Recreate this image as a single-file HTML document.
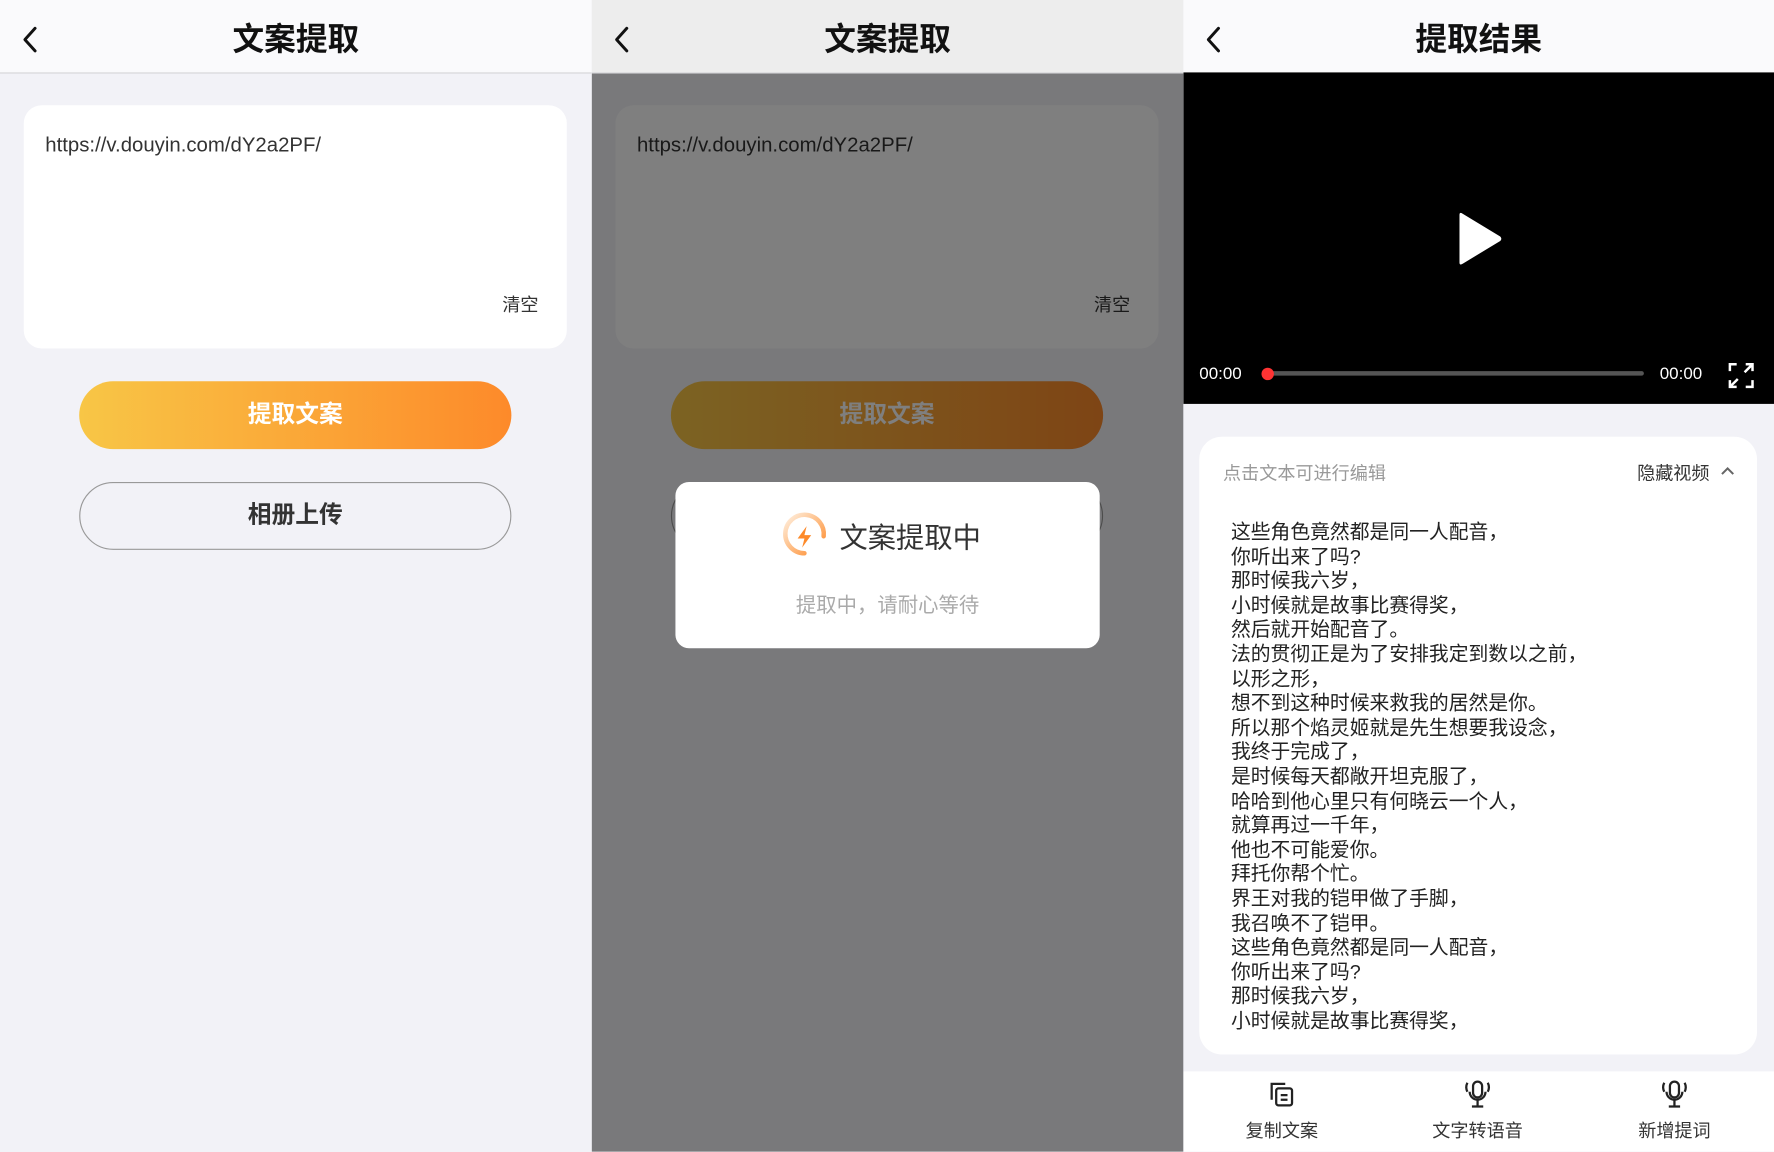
<!DOCTYPE html>
<html><head><meta charset="utf-8"><style>
*{margin:0;padding:0;box-sizing:border-box}
html,body{width:1774px;height:1152px;overflow:hidden;background:#f2f2f7}
body{font-family:"Liberation Sans","Noto Sans CJK SC",sans-serif}
#w{position:absolute;left:0;top:0;width:1568px;height:1018px;transform:scale(1.13138);transform-origin:0 0}
.a{position:absolute}
.p{position:absolute;top:0;height:1018px;width:523px;background:#f2f2f7;overflow:hidden}
.hd{position:absolute;left:0;top:0;width:100%;height:65px;background:#fafafc;border-bottom:1px solid #d4d4d8}
.tt{position:absolute;width:100%;top:13px;text-align:center;font-size:28px;font-weight:bold;color:#111}
.bk{position:absolute;left:18px;top:22px}
.card{position:absolute;left:21px;top:93px;width:480px;height:215px;background:#fff;border-radius:16px}
.url{position:absolute;left:19px;top:25px;font-size:18px;color:#333}
.clr{position:absolute;right:25px;top:163px;font-size:16px;color:#333}
.b1{position:absolute;left:70px;top:337px;width:382px;height:60px;border-radius:30px;background:linear-gradient(90deg,#f8c646,#fd8a2a);color:#fff;font-size:21px;font-weight:bold;text-align:center;line-height:60px}
.b2{position:absolute;left:70px;top:426px;width:382px;height:60px;border-radius:30px;border:1.5px solid #999;color:#333;font-size:21px;font-weight:bold;text-align:center;line-height:57px}
.txt{position:absolute;left:28px;top:74px;font-size:17.5px;line-height:21.6px;color:#222;white-space:pre}
.tb{position:absolute;top:947px;left:0;width:522px;height:71px;background:#fff}
.ti{position:absolute;top:6px;width:120px;text-align:center}
.ti span{display:block;font-size:16px;color:#333;margin-top:0}
</style></head><body><div id="w">

<div class="p" style="left:0">
<div class="hd"><svg class="bk" width="18" height="26" viewBox="0 0 18 26"><path d="M13 3L4 13l9 10" fill="none" stroke="#111" stroke-width="2.6" stroke-linecap="round" stroke-linejoin="round"/></svg><div class="tt">文案提取</div></div>
<div class="card"><div class="url">https://v.douyin.com/dY2a2PF/</div><div class="clr">清空</div></div>
<div class="b1">提取文案</div>
<div class="b2">相册上传</div>
</div>

<div class="p" style="left:523px">
<div class="hd" style="background:#ededed"><svg class="bk" width="18" height="26" viewBox="0 0 18 26"><path d="M13 3L4 13l9 10" fill="none" stroke="#111" stroke-width="2.6" stroke-linecap="round" stroke-linejoin="round"/></svg><div class="tt">文案提取</div></div>
<div class="card"><div class="url">https://v.douyin.com/dY2a2PF/</div><div class="clr">清空</div></div>
<div class="b1">提取文案</div>
<div class="b2">相册上传</div>
<div class="a" style="left:0;top:65px;width:523px;height:953px;background:rgba(0,0,0,0.5)"></div>
<div class="a" style="left:74px;top:426px;width:375px;height:147px;background:#fff;border-radius:12px">
<svg class="a" style="left:92px;top:26px" width="44" height="44" viewBox="0 0 44 44"><defs><linearGradient id="g" x1="1" y1="0" x2="0" y2="1"><stop offset="0" stop-color="#fd8a2a"/><stop offset="1" stop-color="#fff0e0"/></linearGradient></defs><path d="M37 22A17 17 0 1 1 22 5" fill="none" stroke="url(#g)" stroke-width="4" stroke-linecap="round" transform="rotate(90 22 22)"/><path d="M24 13l-8 11h6l-2 8 8-11h-6z" fill="#fd8a2a"/></svg>
<div class="a" style="left:145px;top:30px;font-size:25px;color:#333">文案提取中</div>
<div class="a" style="left:0;width:375px;top:95px;text-align:center;font-size:18px;color:#aaa">提取中，请耐心等待</div>
</div>
</div>

<div class="p" style="left:1046px;width:522px">
<div class="hd" style="border:none;height:64px"><svg class="bk" width="18" height="26" viewBox="0 0 18 26"><path d="M13 3L4 13l9 10" fill="none" stroke="#111" stroke-width="2.6" stroke-linecap="round" stroke-linejoin="round"/></svg><div class="tt">提取结果</div></div>
<div class="a" style="left:0;top:64px;width:522px;height:293px;background:#000">
<svg class="a" style="left:241px;top:122px" width="42" height="50" viewBox="0 0 42 50"><path d="M3 4Q3 1 6 3L39 23Q41 25 39 27L6 47Q3 49 3 46Z" fill="#fff"/></svg>
<div class="a" style="left:14px;top:258px;font-size:15px;color:#fff">00:00</div>
<div class="a" style="left:75px;top:264px;width:332px;height:4px;border-radius:2px;background:#555"></div>
<div class="a" style="left:69px;top:261px;width:11px;height:11px;border-radius:50%;background:#f33"></div>
<div class="a" style="left:421px;top:258px;font-size:15px;color:#fff">00:00</div>
<svg class="a" style="left:481px;top:256px" width="24" height="24" viewBox="0 0 24 24" fill="none" stroke="#fff" stroke-width="2.2"><path d="M2 8V2h6M22 8V2h-6M2 16v6h6M22 16v6h-6M15 9l6-6M9 15l-6 6"/></svg>
</div>
<div class="a" style="left:14px;top:386px;width:493px;height:546px;background:#fff;border-radius:20px">
<div class="a" style="left:21px;top:19px;font-size:16px;color:#999">点击文本可进行编辑</div>
<div class="a" style="left:387px;top:19px;font-size:16px;color:#333">隐藏视频</div>
<svg class="a" style="left:460px;top:25px" width="14" height="10" viewBox="0 0 14 10"><path d="M2 8l5-5 5 5" fill="none" stroke="#666" stroke-width="1.8"/></svg>
<div class="txt">这些角色竟然都是同一人配音，
你听出来了吗?
那时候我六岁，
小时候就是故事比赛得奖，
然后就开始配音了。
法的贯彻正是为了安排我定到数以之前，
以形之形，
想不到这种时候来救我的居然是你。
所以那个焰灵姬就是先生想要我设念，
我终于完成了，
是时候每天都敞开坦克服了，
哈哈到他心里只有何晓云一个人，
就算再过一千年，
他也不可能爱你。
拜托你帮个忙。
界王对我的铠甲做了手脚，
我召唤不了铠甲。
这些角色竟然都是同一人配音，
你听出来了吗?
那时候我六岁，
小时候就是故事比赛得奖，</div>
</div>
<div class="tb">
<div class="ti" style="left:27px"><svg width="28" height="28" viewBox="0 0 28 28" fill="none" stroke="#222" stroke-width="2"><path d="M5 19V5h12"/><rect x="9" y="9" width="14" height="15" rx="2"/><path d="M13 15h6M13 19h6"/></svg><span>复制文案</span></div>
<div class="ti" style="left:200px"><svg width="28" height="28" viewBox="0 0 28 28" fill="none" stroke="#222" stroke-width="2"><rect x="10" y="3" width="8" height="14" rx="4"/><path d="M7 12a7 7 0 0 0 14 0M14 19v5M9 25h10M5 4q-2 4 0 8M23 4q2 4 0 8"/></svg><span>文字转语音</span></div>
<div class="ti" style="left:374px"><svg width="28" height="28" viewBox="0 0 28 28" fill="none" stroke="#222" stroke-width="2"><rect x="10" y="3" width="8" height="14" rx="4"/><path d="M7 12a7 7 0 0 0 14 0M14 19v5M9 25h10M5 4q-2 4 0 8M23 4q2 4 0 8"/></svg><span>新增提词</span></div>
</div>
</div>

</div></body></html>
